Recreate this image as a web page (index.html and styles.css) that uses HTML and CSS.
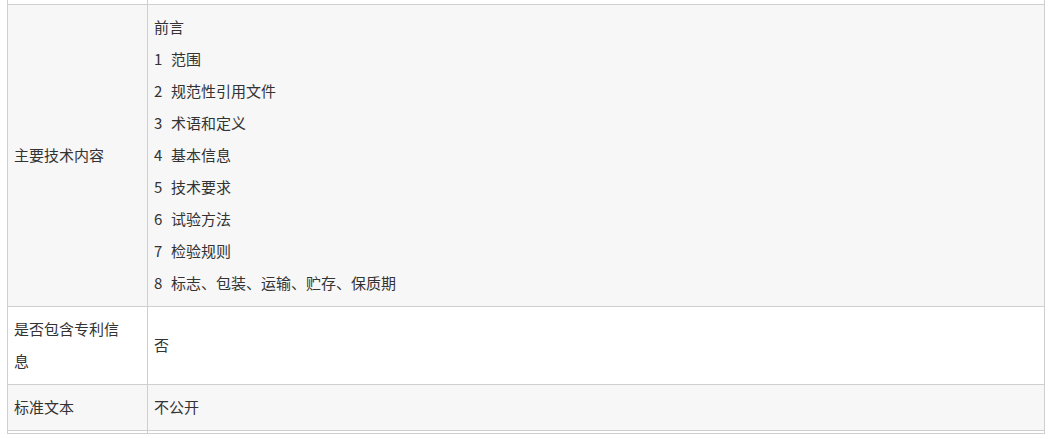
FILE: index.html
```html
<!DOCTYPE html>
<html lang="zh">
<head>
<meta charset="utf-8">
<link rel="stylesheet" href="styles.css">
</head>
<body>
<div class="wrap">
<table class="info">
  <colgroup><col class="col-label"><col class="col-value"></colgroup>
  <tr class="row-white row-top"><td class="label"></td><td class="value"></td></tr>
  <tr class="row-gray">
    <td class="label">主要技术内容</td>
    <td class="value">
      <div class="line">前言</div>
      <div class="line"><span class="num">1</span>范围</div>
      <div class="line"><span class="num">2</span>规范性引用文件</div>
      <div class="line"><span class="num">3</span>术语和定义</div>
      <div class="line"><span class="num">4</span>基本信息</div>
      <div class="line"><span class="num">5</span>技术要求</div>
      <div class="line"><span class="num">6</span>试验方法</div>
      <div class="line"><span class="num">7</span>检验规则</div>
      <div class="line"><span class="num">8</span>标志、包装、运输、贮存、保质期</div>
    </td>
  </tr>
  <tr class="row-white">
    <td class="label">是否包含专利信息</td>
    <td class="value">否</td>
  </tr>
  <tr class="row-gray">
    <td class="label">标准文本</td>
    <td class="value">不公开</td>
  </tr>
  <tr class="row-white row-end"><td class="label"></td><td class="value"></td></tr>
</table>
</div>
</body>
</html>
```
FILE: styles.css
```css
html, body {
  margin: 0;
  padding: 0;
  background: #ffffff;
}
.wrap {
  padding: 0 0 0 7px;
}
.info {
  width: 1038px;
  border-collapse: collapse;
  table-layout: fixed;
  font-family: "Noto Sans CJK SC", "Microsoft YaHei", sans-serif;
  font-size: 15px;
  line-height: 32px;
  color: #333333;
}
.col-label {
  width: 140px;
}
.info td {
  border: 1px solid #cfcfcf;
  padding: 6px 6px 7px 6px;
  vertical-align: middle;
  text-align: left;
}
.info td.label {
  padding-right: 20px;
}
.row-gray td {
  background: #f7f7f7;
}
.row-white td {
  background: #ffffff;
}
.row-top td {
  height: 4px;
  padding: 0;
  line-height: 0;
  border-top: none;
}
.row-end td {
  height: 2px;
  padding: 0;
  line-height: 0;
  border-top: none;
}
.line {
  white-space: nowrap;
}
.num {
  display: inline-block;
  width: 17px;
}
```
